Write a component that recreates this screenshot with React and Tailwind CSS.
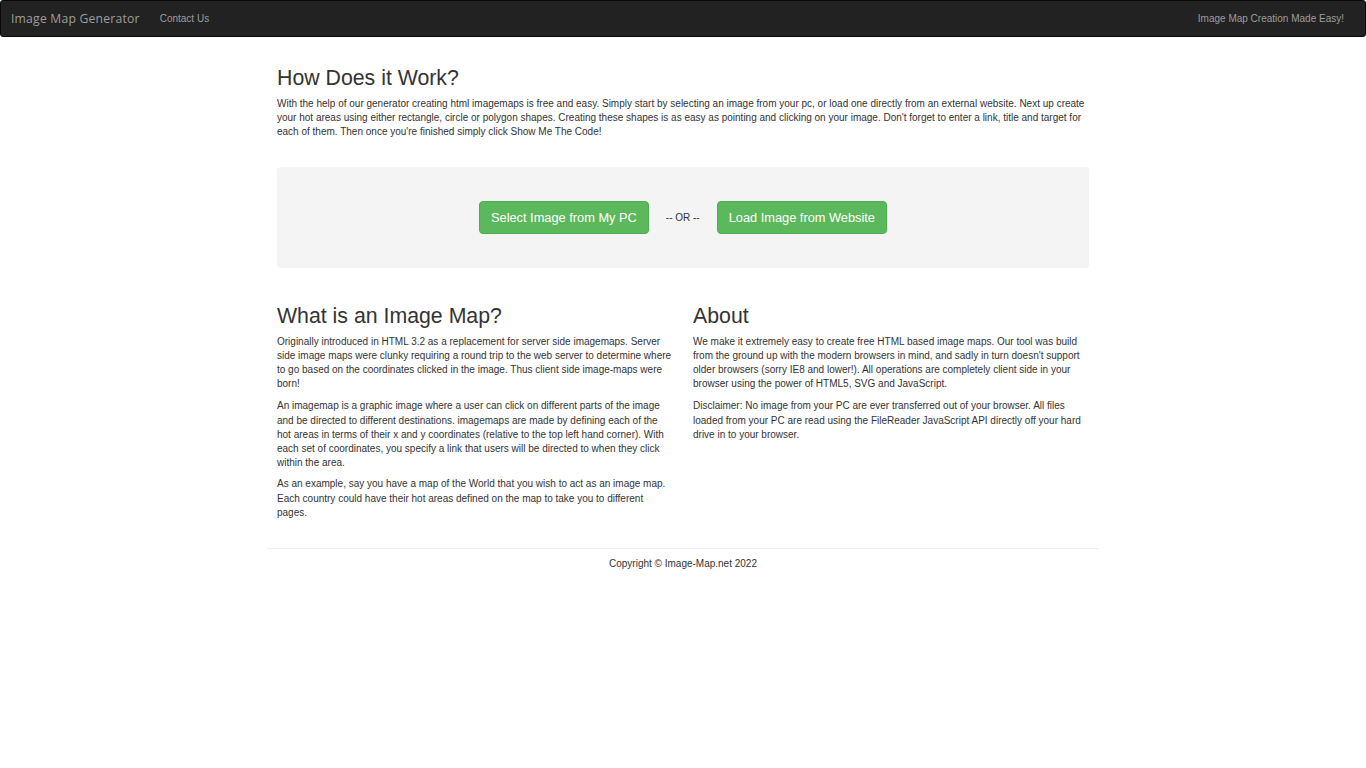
export default function App() {
  const body = { fontFamily: '"Liberation Sans", Arial, Helvetica, sans-serif' };
  return (
    <div className="min-h-screen bg-white text-[#333] text-[10px] leading-[14.2px]" style={body}>
      <nav className="h-[37px] pt-[1px] bg-[#222] border border-[#080808] rounded-[3px] flex items-center justify-between">
        <div className="flex items-center">
          <span className="pl-[10px] pr-[20px] text-[12.2px] text-[#9d9d9d]" style={{ fontFamily: '"Open Sans", "DejaVu Sans", sans-serif', letterSpacing: '0.2px' }}>
            Image Map Generator
          </span>
          <span className="text-[10px] text-[#9d9d9d]">Contact Us</span>
        </div>
        <span className="pr-[21px] text-[10px] text-[#9d9d9d]">Image Map Creation Made Easy!</span>
      </nav>

      <div className="w-[832px] mx-auto px-[10px] pt-[30px]">
        <h2 className="text-[21.3px] leading-[23.5px] mb-[6px] font-normal">How Does it Work?</h2>
        <p className="mb-[7px]">
          With the help of our generator creating html imagemaps is free and easy. Simply start by selecting an image from your pc, or load one directly from an external website. Next up create your hot areas using either rectangle, circle or polygon shapes. Creating these shapes is as easy as pointing and clicking on your image. Don't forget to enter a link, title and target for each of them. Then once you're finished simply click Show Me The Code!
        </p>

        <div className="mt-[28px] h-[101px] bg-[#f4f4f4] rounded-[4px] flex items-center justify-center gap-[17px]">
          <button className="h-[33px] px-[11px] bg-[#5cb85c] border border-[#4cae4c] rounded-[4px] text-white text-[12.8px]">
            Select Image from My PC
          </button>
          <span className="text-[10px] text-[#333]">-- OR --</span>
          <button className="h-[33px] px-[11px] bg-[#5cb85c] border border-[#4cae4c] rounded-[4px] text-white text-[12.8px]">
            Load Image from Website
          </button>
        </div>

        <div className="mt-[37px] grid grid-cols-2 gap-[20px]">
          <div>
            <h2 className="text-[21.3px] leading-[23.5px] mb-[6px] font-normal">What is an Image Map?</h2>
            <p className="mb-[8px]">
              Originally introduced in HTML 3.2 as a replacement for server side imagemaps. Server side image maps were clunky requiring a round trip to the web server to determine where to go based on the coordinates clicked in the image. Thus client side image-maps were born!
            </p>
            <p className="mb-[7px]">
              An imagemap is a graphic image where a user can click on different parts of the image and be directed to different destinations. imagemaps are made by defining each of the hot areas in terms of their x and y coordinates (relative to the top left hand corner). With each set of coordinates, you specify a link that users will be directed to when they click within the area.
            </p>
            <p className="mb-[7px]">
              As an example, say you have a map of the World that you wish to act as an image map. Each country could have their hot areas defined on the map to take you to different pages.
            </p>
          </div>
          <div>
            <h2 className="text-[21.3px] leading-[23.5px] mb-[6px] font-normal">About</h2>
            <p className="mb-[8px]">
              We make it extremely easy to create free HTML based image maps. Our tool was build from the ground up with the modern browsers in mind, and sadly in turn doesn't support older browsers (sorry IE8 and lower!). All operations are completely client side in your browser using the power of HTML5, SVG and JavaScript.
            </p>
            <p className="mb-[7px]">
              Disclaimer: No image from your PC are ever transferred out of your browser. All files loaded from your PC are read using the FileReader JavaScript API directly off your hard drive in to your browser.
            </p>
          </div>
        </div>
      </div>

      <div className="w-[832px] mx-auto mt-[21px] border-t border-[#eee] pt-[8px] text-center">
        Copyright © Image-Map.net 2022
      </div>
    </div>
  );
}
